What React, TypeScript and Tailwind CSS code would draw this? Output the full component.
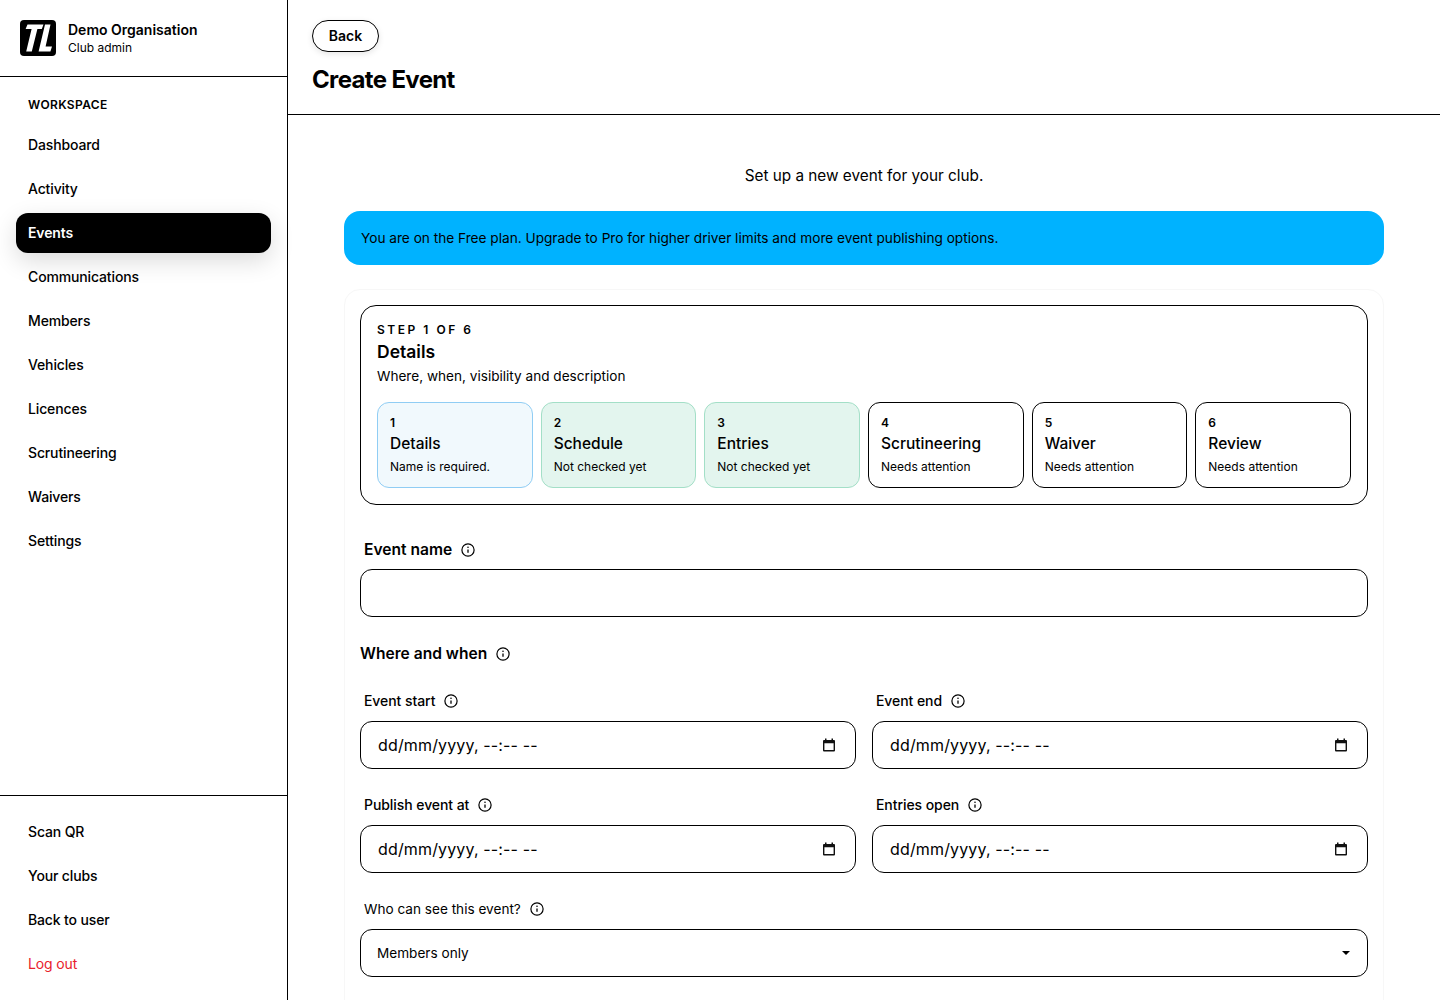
const workspaceLinks = ['Dashboard', 'Activity', 'Events', 'Communications', 'Members', 'Vehicles', 'Licences', 'Scrutineering', 'Waivers', 'Settings']
const footerLinks = ['Scan QR', 'Your clubs', 'Back to user']

const steps = [
  { n: 1, title: 'Details', note: 'Name is required.', tone: 'border-[#90cdf4] bg-[#f1f9fd]' },
  { n: 2, title: 'Schedule', note: 'Not checked yet', tone: 'border-[#a3dfc7] bg-[#e3f5ee]' },
  { n: 3, title: 'Entries', note: 'Not checked yet', tone: 'border-[#a3dfc7] bg-[#e3f5ee]' },
  { n: 4, title: 'Scrutineering', note: 'Needs attention', tone: 'border-black bg-white' },
  { n: 5, title: 'Waiver', note: 'Needs attention', tone: 'border-black bg-white' },
  { n: 6, title: 'Review', note: 'Needs attention', tone: 'border-black bg-white' },
]

function InfoIcon() {
  return (
    <svg width="16" height="16" viewBox="0 0 16 16" fill="none" className="shrink-0">
      <circle cx="8" cy="8" r="6.1" stroke="black" strokeWidth="1.2" />
      <path d="M8 7.4v3.4" stroke="black" strokeWidth="1.3" />
      <circle cx="8" cy="5.3" r="0.8" fill="black" />
    </svg>
  )
}

function CalendarIcon() {
  return (
    <svg width="14" height="14" viewBox="0 0 14 14" className="shrink-0">
      <path d="M3 0.5h1.5V2h5V0.5H11V2h1a1 1 0 0 1 1 1v9.5a1 1 0 0 1-1 1H2a1 1 0 0 1-1-1V3a1 1 0 0 1 1-1h1zM2.4 5.2v6.9h9.2V5.2z" fill="#111" fillRule="evenodd" />
    </svg>
  )
}

function Logo() {
  return (
    <svg width="36" height="36" viewBox="0 0 36 36" className="shrink-0">
      <rect width="36" height="36" rx="4" fill="black" />
      <path d="M7.5 4.5H23.5L21.8 9H17.4L11.8 31.5H6.2L11.6 9H5.6z" fill="white" />
      <path d="M25 4.5H30.5L25.6 26.5H32L30.4 31.5H18.6z" fill="white" />
    </svg>
  )
}

function DateField({ label }: { label: string }) {
  return (
    <div>
      <div className="flex h-6 items-center gap-2 pl-1 text-sm font-medium tracking-[-0.005em] text-black">
        {label}
        <InfoIcon />
      </div>
      <div className="mt-2 flex h-12 items-center justify-between rounded-xl border border-black pl-[17px] pr-[19px] text-base text-black">
        <span className="tracking-[0.15px]">dd/mm/yyyy, --:-- --</span>
        <CalendarIcon />
      </div>
    </div>
  )
}

export default function App() {
  return (
    <div className="flex h-[1000px] overflow-hidden bg-white text-black font-['Inter',sans-serif]">
      <aside className="flex w-[288px] shrink-0 flex-col border-r border-black">
        <div className="flex h-[77px] items-center gap-3 border-b border-black pb-[1px] pl-5">
          <Logo />
          <div>
            <div className="text-sm font-semibold leading-5">Demo Organisation</div>
            <div className="text-xs leading-4">Club admin</div>
          </div>
        </div>
        <nav className="flex flex-1 flex-col px-4 pt-[19px]">
          <div className="flex h-[18px] items-center px-3 text-xs font-semibold tracking-[0.03em]">WORKSPACE</div>
          <div className="flex flex-col gap-1 pt-[11px]">
            {workspaceLinks.map((link) => (
              <div
                key={link}
                className={
                  link === 'Events'
                    ? 'flex h-10 items-center rounded-xl bg-black px-3 text-sm font-semibold tracking-[-0.01em] text-white shadow-[0_8px_24px_rgba(0,0,0,0.14)]'
                    : 'flex h-10 items-center px-3 text-sm font-medium tracking-[-0.01em]'
                }
              >
                {link}
              </div>
            ))}
          </div>
        </nav>
        <div className="flex h-[205px] flex-col gap-1 border-t border-black px-4 pt-4">
          {footerLinks.map((link) => (
            <div key={link} className="flex h-10 items-center px-3 text-sm font-medium tracking-[-0.01em]">{link}</div>
          ))}
          <div className="flex h-10 items-center px-3 text-sm tracking-[-0.01em] text-[#e8212b]">Log out</div>
        </div>
      </aside>

      <main className="min-w-0 flex-1">
        <header className="h-[115px] border-b border-black px-6 pt-5">
          <button className="flex h-8 w-[67px] items-center justify-center rounded-full border border-black bg-white text-sm font-semibold shadow-[0_2px_6px_rgba(0,0,0,0.1)]">
            Back
          </button>
          <h1 className="mt-[12px] text-2xl font-bold leading-8 tracking-[-0.027em]">Create Event</h1>
        </header>

        <div className="px-14 pt-[49px]">
          <p className="text-center text-[15.3px] leading-6">Set up a new event for your club.</p>
          <div className="mt-[23px] flex h-[54px] items-center rounded-2xl bg-[#00b2ff] px-[17px] text-[13.65px]">
            You are on the Free plan. Upgrade to Pro for higher driver limits and more event publishing options.
          </div>

          <div className="mt-[24px] rounded-2xl border border-[#f7f7f7] p-[15px] pb-[60px]">
            <section className="h-[200px] rounded-2xl border border-black px-4 pt-4">
              <div className="text-xs font-semibold leading-4 tracking-[0.21em]">STEP 1 OF 6</div>
              <div className="text-[17.5px] font-semibold leading-7">Details</div>
              <div className="text-[13.6px] leading-5">Where, when, visibility and description</div>
              <div className="mt-4 grid grid-cols-6 gap-2">
                {steps.map((step) => (
                  <div key={step.n} className={`h-[86px] rounded-xl border px-3 pt-3 ${step.tone}`}>
                    <div className="text-xs font-semibold leading-4">{step.n}</div>
                    <div className="mt-[1px] text-[15.5px] font-medium leading-6">{step.title}</div>
                    <div className="mt-[3px] text-xs leading-4">{step.note}</div>
                  </div>
                ))}
              </div>
            </section>

            <div className="mt-[32px] flex h-6 items-center gap-2 pl-1 pt-[2px] text-[15.6px] font-semibold">
              Event name
              <InfoIcon />
            </div>
            <div className="mt-2 h-12 rounded-xl border border-black" />

            <div className="mt-[24px] flex h-6 items-center gap-2 pt-[2px] text-[15.6px] font-semibold">
              Where and when
              <InfoIcon />
            </div>

            <div className="mt-[24px] grid grid-cols-2 gap-x-4 gap-y-6">
              <DateField label="Event start" />
              <DateField label="Event end" />
              <DateField label="Publish event at" />
              <DateField label="Entries open" />
            </div>

            <div className="mt-6 flex h-6 items-center gap-2 pl-1 text-[13.6px]">
              Who can see this event?
              <InfoIcon />
            </div>
            <div className="mt-2 flex h-12 items-center justify-between rounded-xl border border-black pl-4 pr-4 text-[13.6px]">
              <span>Members only</span>
              <svg width="10" height="6" viewBox="0 0 10 6">
                <path d="M1 1h8L5 5z" fill="black" />
              </svg>
            </div>
          </div>
        </div>
      </main>
    </div>
  )
}
